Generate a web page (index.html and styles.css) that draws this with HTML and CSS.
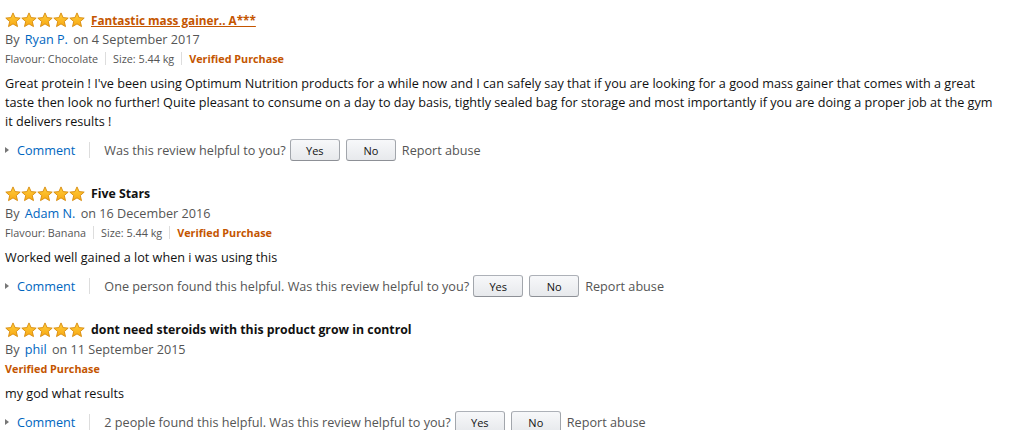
FILE: index.html
```html
<!DOCTYPE html>
<html lang="en">
<head>
<meta charset="utf-8">
<title>Reviews</title>
<link rel="stylesheet" href="styles.css">
</head>
<body>
<svg width="0" height="0" class="defs" aria-hidden="true">
  <defs>
    <linearGradient id="sg" x1="0" y1="0" x2="0" y2="1">
      <stop offset="0" stop-color="#ffce3d"/>
      <stop offset="1" stop-color="#f8a812"/>
    </linearGradient>
    <symbol id="star" viewBox="0 0 16 16">
      <path d="M8 0.9 L10.1 5.6 L15.2 6.1 L11.3 9.5 L12.5 14.6 L8 11.9 L3.5 14.6 L4.7 9.5 L0.8 6.1 L5.9 5.6 Z" fill="url(#sg)" stroke="#d68a0c" stroke-width="0.9" stroke-linejoin="round"/>
    </symbol>
  </defs>
</svg>
<div class="reviews">

  <div class="review">
    <div class="head">
      <span class="stars"><svg><use href="#star"/></svg><svg><use href="#star"/></svg><svg><use href="#star"/></svg><svg><use href="#star"/></svg><svg><use href="#star"/></svg></span>
      <a class="title title-link" href="#">Fantastic mass gainer.. A***</a>
    </div>
    <div class="byline">By <a class="author" href="#">Ryan P.</a> on 4 September 2017</div>
    <div class="meta"><span class="attr">Flavour: Chocolate</span><span class="attr">Size: 5.44 kg</span><span class="verified">Verified Purchase</span></div>
    <p class="text">Great protein ! I've been using Optimum Nutrition products for a while now and I can safely say that if you are looking for a good mass gainer that comes with a great taste then look no further! Quite pleasant to consume on a day to day basis, tightly sealed bag for storage and most importantly if you are doing a proper job at the gym it delivers results !</p>
    <div class="actions">
      <a class="comment" href="#"><span class="tri"></span>Comment</a>
      <span class="helpful">Was this review helpful to you?</span>
      <button class="btn">Yes</button>
      <button class="btn">No</button>
      <span class="abuse">Report abuse</span>
    </div>
  </div>

  <div class="review">
    <div class="head">
      <span class="stars"><svg><use href="#star"/></svg><svg><use href="#star"/></svg><svg><use href="#star"/></svg><svg><use href="#star"/></svg><svg><use href="#star"/></svg></span>
      <span class="title">Five Stars</span>
    </div>
    <div class="byline">By <a class="author" href="#">Adam N.</a> on 16 December 2016</div>
    <div class="meta"><span class="attr">Flavour: Banana</span><span class="attr">Size: 5.44 kg</span><span class="verified">Verified Purchase</span></div>
    <p class="text">Worked well gained a lot when i was using this</p>
    <div class="actions">
      <a class="comment" href="#"><span class="tri"></span>Comment</a>
      <span class="helpful">One person found this helpful. Was this review helpful to you?</span>
      <button class="btn">Yes</button>
      <button class="btn">No</button>
      <span class="abuse">Report abuse</span>
    </div>
  </div>

  <div class="review">
    <div class="head">
      <span class="stars"><svg><use href="#star"/></svg><svg><use href="#star"/></svg><svg><use href="#star"/></svg><svg><use href="#star"/></svg><svg><use href="#star"/></svg></span>
      <span class="title">dont need steroids with this product grow in control</span>
    </div>
    <div class="byline">By <a class="author" href="#">phil</a> on 11 September 2015</div>
    <div class="meta"><span class="verified">Verified Purchase</span></div>
    <p class="text">my god what results</p>
    <div class="actions">
      <a class="comment" href="#"><span class="tri"></span>Comment</a>
      <span class="helpful">2 people found this helpful. Was this review helpful to you?</span>
      <button class="btn">Yes</button>
      <button class="btn">No</button>
      <span class="abuse">Report abuse</span>
    </div>
  </div>

</div>
</body>
</html>
```

FILE: styles.css
```css
html, body {
  margin: 0;
  padding: 0;
  background: #fff;
}
body {
  font-family: "Open Sans", "Noto Sans", sans-serif;
  font-size: 12.65px;
  color: #111;
}
.defs {
  position: absolute;
  width: 0;
  height: 0;
}
.reviews {
  padding: 9px 0 0 5px;
  width: 995px;
}
.review {
  margin-bottom: 22px;
}
.review:last-child {
  margin-bottom: 0;
}
.head {
  display: flex;
  align-items: center;
  height: 21px;
  gap: 6px;
}
.stars {
  display: flex;
  align-items: center;
}
.stars svg {
  width: 16px;
  height: 16px;
  display: block;
}
.title {
  font-weight: 700;
  font-size: 12.3px;
  color: #111;
  text-decoration: none;
}
.title-link {
  font-size: 11.75px;
  color: #c45500;
  text-decoration: underline;
}
.byline {
  line-height: 19px;
  color: #555;
}
.author {
  color: #0066c0;
  text-decoration: none;
  margin: 0 2px;
}
.meta {
  line-height: 19px;
  font-size: 10.8px;
  color: #555;
  display: flex;
  align-items: center;
}
.attr {
  padding-right: 7px;
  margin-right: 7px;
  border-right: 1px solid #ddd;
  line-height: 13px;
}
.verified {
  color: #c45500;
  font-weight: 700;
}
.text {
  margin: 5.5px 0 0;
  line-height: 19px;
}
.actions {
  display: flex;
  align-items: center;
  height: 22px;
  margin-top: 8.5px;
  color: #555;
}
.comment {
  color: #0066c0;
  text-decoration: none;
  display: flex;
  align-items: center;
  padding-right: 14px;
  border-right: 1px solid #ddd;
  line-height: 16px;
  margin-right: 14px;
}
.tri {
  width: 0;
  height: 0;
  border-left: 4px solid #777;
  border-top: 3px solid transparent;
  border-bottom: 3px solid transparent;
  margin-right: 8px;
}
.helpful {
  margin-right: 4px;
}
.btn {
  font-family: inherit;
  font-size: 11px;
  color: #111;
  width: 50px;
  height: 22px;
  padding: 0;
  margin-right: 6px;
  border: 1px solid #adb1b8;
  border-color: #adb1b8 #a2a6ac #8d9096;
  border-radius: 3px;
  background: linear-gradient(#f7f8fa, #e7e9ec);
}
.abuse {
  color: #555;
}
```
